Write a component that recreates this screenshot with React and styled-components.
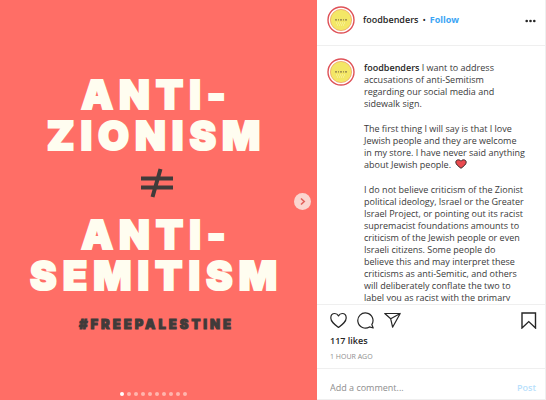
import React from "react";
import styled, { createGlobalStyle } from "styled-components";

const GlobalStyle = createGlobalStyle`
  * { box-sizing: border-box; }
  body {
    margin: 0;
    background: #fff;
    color: #262626;
    font-family: "Open Sans", "Noto Sans", sans-serif;
    font-size: 9px;
    line-height: 12px;
  }
  button, input { font: inherit; color: inherit; border: 0; background: none; padding: 0; margin: 0; }
  button { cursor: pointer; }
  p { margin: 0; }
`;

const Post = styled.article`
  display: grid;
  grid-template-columns: 317fr 229fr;
  grid-template-rows: minmax(0, 1fr);
  height: 100vh;
  min-height: 320px;
`;

const Slide = styled.section`
  position: relative;
  display: flex;
  flex-direction: column;
  align-items: center;
  padding: 74px 4px 0 0;
  background: #ff6e66;
  overflow: hidden;
`;

const Headline = styled.h1`
  margin: 0;
  color: #fffdf0;
  font: 900 40px/41px Inter, sans-serif;
  letter-spacing: 6px;
  text-align: center;
  white-space: pre-line;
  -webkit-text-stroke: 2px #fffdf0;
`;

const NotEqual = styled.svg`
  width: 34px;
  height: 30px;
  margin: 12px 0 16px;
`;

const Hashtag = styled.p`
  margin-top: 20px;
  color: #403b3a;
  font: 900 13px/16px Inter, sans-serif;
  letter-spacing: 3px;
  -webkit-text-stroke: 1px #403b3a;
`;

const NextButton = styled.button`
  position: absolute;
  right: 6px;
  top: 50%;
  width: 17px;
  height: 17px;
  margin-top: -7px;
  border-radius: 50%;
  background: #fbd5cf;
  display: grid;
  place-items: center;
`;

const Dots = styled.div`
  position: absolute;
  left: 0;
  right: 10px;
  bottom: 4px;
  display: flex;
  justify-content: center;
  gap: 3px;
`;

const Dot = styled.span`
  width: 4px;
  height: 4px;
  border-radius: 50%;
  background: ${(p) => (p.$active ? "#fff" : "#ffb5ae")};
`;

const Panel = styled.section`
  display: flex;
  flex-direction: column;
  min-width: 0;
  min-height: 0;
  border: solid #efefef;
  border-width: 0 1px 1px 0;
`;

const Header = styled.header`
  display: flex;
  align-items: center;
  height: 46px;
  padding: 0 9px 5px 10px;
  border-bottom: 1px solid #efefef;
`;

const Avatar = styled.svg`
  flex: none;
  width: 28px;
  height: 28px;
`;

const Name = styled.a`
  color: #262626;
  font-weight: 600;
  text-decoration: none;
`;

const HeaderNames = styled.div`
  display: flex;
  flex: 1;
  gap: 4px;
  margin-left: 8px;
`;

const FollowButton = styled.button`
  color: #3ba5f5;
  font-weight: 700;
`;

const Comments = styled.div`
  display: flex;
  flex: 1;
  align-items: flex-start;
  gap: 9px;
  min-height: 0;
  margin-bottom: 3px;
  padding: 12px 8px 0 10px;
  overflow: hidden;
`;

const Caption = styled.div`
  display: flex;
  flex-direction: column;
  gap: 13px;
  padding-top: 4px;
  color: #3a3a3a;
  white-space: pre-line;
`;

const Heart = styled.svg`
  width: 12px;
  height: 10px;
  margin-left: 2px;
  vertical-align: -1px;
`;

const Footer = styled.div`
  padding: 7px 8px 5px 13px;
  border-top: 1px solid #efefef;
`;

const Actions = styled.div`
  display: flex;
  gap: 10px;
`;

const IconButton = styled.button`
  width: 17px;
  height: 17px;
  margin-left: ${(p) => (p.$end ? "auto" : "0")};
  svg { display: block; width: 17px; height: 17px; }
`;

const Likes = styled.p`
  margin-top: 6px;
  font-weight: 600;
`;

const Time = styled.time`
  display: block;
  margin-top: 4px;
  color: #8e8e8e;
  font-size: 7px;
`;

const CommentForm = styled.form`
  display: flex;
  align-items: center;
  height: 31px;
  padding: 8px 9px 0 13px;
  border-top: 1px solid #efefef;
`;

const CommentInput = styled.input`
  flex: 1;
  min-width: 0;
  outline: none;
  &::placeholder { color: #8e8e8e; opacity: 1; }
`;

const PostButton = styled.button`
  color: #b9dffc;
  font-weight: 600;
`;

const FoodbendersAvatar = () => (
  <Avatar viewBox="0 0 28 28" aria-hidden="true">
    <circle cx="14" cy="14" r="13" fill="#fff" stroke="#df5258" strokeWidth="1.4" />
    <circle cx="14" cy="14" r="10.6" fill="#f3e766" stroke="#ee9a62" strokeWidth=".7" />
    <path d="M8 13.8h2M11 13.8h1M13 13.8h2M16 13.8h1M18 13.8h2" stroke="#8c7d4c" strokeWidth="1.3" />
    <path d="M9 17h10M10 19h8" stroke="#faf5b5" strokeWidth="1" strokeDasharray="1 1" />
  </Avatar>
);

const stroke = { fill: "none", stroke: "#262626", strokeWidth: 1.2, strokeLinejoin: "round", strokeLinecap: "round" };

export default function App() {
  return (
    <>
      <GlobalStyle />
      <Post>
        <Slide>
          <Headline>{"ANTI-\nZIONISM"}</Headline>
          <NotEqual viewBox="0 0 34 30" role="img" aria-label="is not equal to">
            <path d="M1 10.5h32M1 19.5h32M20.5 1L12.5 29" fill="none" stroke="#403b3a" strokeWidth="4" />
          </NotEqual>
          <Headline as="h2">{"ANTI-\nSEMITISM"}</Headline>
          <Hashtag>#FREEPALESTINE</Hashtag>
          <NextButton aria-label="Next">
            <svg width="9" height="9" viewBox="0 0 9 9" aria-hidden="true">
              <path d="M3 1.5L6.2 4.5L3 7.5" fill="none" stroke="#e2625c" strokeWidth="1.6" />
            </svg>
          </NextButton>
          <Dots>
            {Array.from({ length: 10 }, (_, i) => (
              <Dot key={i} $active={i === 0} />
            ))}
          </Dots>
        </Slide>
        <Panel>
          <Header>
            <FoodbendersAvatar />
            <HeaderNames>
              <Name href="#foodbenders">foodbenders</Name>
              <span>•</span>
              <FollowButton>Follow</FollowButton>
            </HeaderNames>
            <button aria-label="More options">
              <svg width="11" height="4" viewBox="0 0 11 4" fill="#262626" aria-hidden="true">
                <circle cx="1.7" cy="2" r="1.3" />
                <circle cx="5.5" cy="2" r="1.3" />
                <circle cx="9.3" cy="2" r="1.3" />
              </svg>
            </button>
          </Header>
          <Comments>
            <FoodbendersAvatar />
            <Caption>
              <p>
                <Name href="#foodbenders">foodbenders</Name>
                {" I want to address\naccusations of anti-Semitism\nregarding our social media and\nsidewalk sign."}
              </p>
              <p>
                {"The first thing I will say is that I love\nJewish people and they are welcome\nin my store. I have never said anything\nabout Jewish people. "}
                <Heart viewBox="0 0 12 10" role="img" aria-label="heart">
                  <path d="M6 9.3C3 7 .8 5.3.8 3.2.8.6 4.4-.1 6 2.2 7.6-.1 11.2.6 11.2 3.2 11.2 5.3 9 7 6 9.3Z" fill="#ea4b50" stroke="#352729" strokeWidth="1" />
                </Heart>
              </p>
              <p>
                {"I do not believe criticism of the Zionist\npolitical ideology, Israel or the Greater\nIsrael Project, or pointing out its racist\nsupremacist foundations amounts to\ncriticism of the Jewish people or even\nIsraeli citizens. Some people do\nbelieve this and may interpret these\ncriticisms as anti-Semitic, and others\nwill deliberately conflate the two to\nlabel you as racist with the primary"}
              </p>
            </Caption>
          </Comments>
          <Footer>
            <Actions>
              <IconButton aria-label="Like">
                <svg viewBox="0 0 17 17" {...stroke}>
                  <path d="M8.5 15.5C4 12 .8 9.5.8 6 .8 3.3 2.5 1.5 4.8 1.5 6.6 1.5 7.8 2.6 8.5 3.9 9.2 2.6 10.4 1.5 12.2 1.5 14.5 1.5 16.2 3.3 16.2 6 16.2 9.5 13 12 8.5 15.5Z" />
                </svg>
              </IconButton>
              <IconButton aria-label="Comment">
                <svg viewBox="0 0 17 17" {...stroke}>
                  <path d="M14.8 12.6A7.6 7.6 0 1 0 12.5 14.9L16.2 16Z" />
                </svg>
              </IconButton>
              <IconButton aria-label="Share">
                <svg viewBox="0 0 17 17" {...stroke}>
                  <path d="M.8 1.5H16.2L8.6 15.2L6.7 6.8ZM6.7 6.8L16.2 1.5" />
                </svg>
              </IconButton>
              <IconButton aria-label="Save" $end>
                <svg viewBox="0 0 17 17" {...stroke} strokeWidth={1.4} strokeLinejoin="miter">
                  <path d="M2 1H15.5V16L8.75 9.6L2 16Z" />
                </svg>
              </IconButton>
            </Actions>
            <Likes>117 likes</Likes>
            <Time>1 HOUR AGO</Time>
          </Footer>
          <CommentForm onSubmit={(e) => e.preventDefault()}>
            <CommentInput aria-label="Add a comment" placeholder="Add a comment..." />
            <PostButton type="submit">Post</PostButton>
          </CommentForm>
        </Panel>
      </Post>
    </>
  );
}
